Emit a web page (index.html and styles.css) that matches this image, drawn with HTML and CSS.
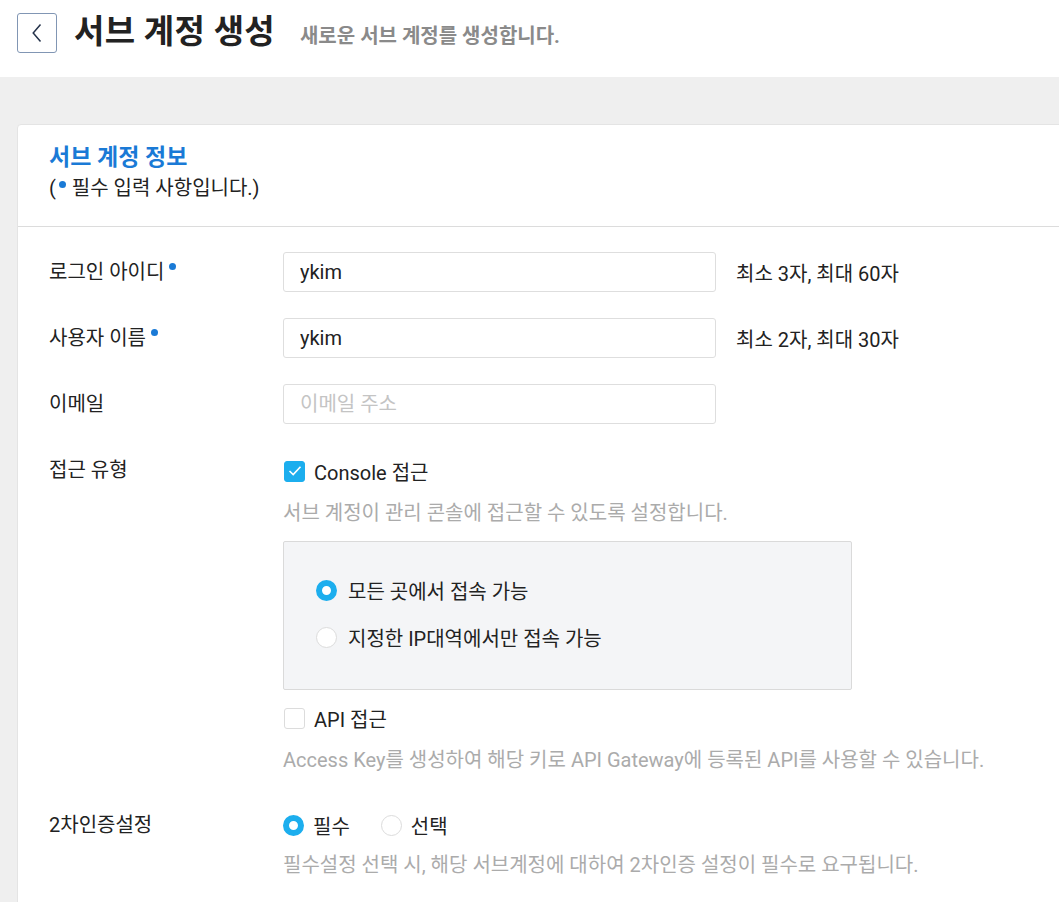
FILE: index.html
```html
<!DOCTYPE html>
<html lang="ko">
<head>
<meta charset="utf-8">
<title>서브 계정 생성</title>
<link rel="stylesheet" href="styles.css">
</head>
<body>
<header class="top">
  <button class="back" type="button" aria-label="뒤로">
    <svg width="14" height="20" viewBox="0 0 14 20"><path d="M10.5 1.5 L3.2 10 L10.5 18.5" fill="none" stroke="#24324a" stroke-width="1.5"/></svg>
  </button>
  <h1 class="title">서브 계정 생성</h1>
  <p class="subtitle">새로운 서브 계정를 생성합니다.</p>
</header>
<main class="main">
  <section class="card">
    <div class="card-head">
      <h2 class="card-title">서브 계정 정보</h2>
      <p class="card-note">(<span class="dot"></span> 필수 입력 사항입니다.)</p>
    </div>
    <div class="form">
      <div class="row">
        <div class="label">로그인 아이디<span class="dot req"></span></div>
        <div class="field">
          <div class="input-line">
            <input class="input" type="text" value="ykim">
            <span class="hint">최소 3자, 최대 60자</span>
          </div>
        </div>
      </div>
      <div class="row">
        <div class="label">사용자 이름<span class="dot req"></span></div>
        <div class="field">
          <div class="input-line">
            <input class="input" type="text" value="ykim">
            <span class="hint">최소 2자, 최대 30자</span>
          </div>
        </div>
      </div>
      <div class="row">
        <div class="label">이메일</div>
        <div class="field">
          <div class="input-line">
            <input class="input" type="text" placeholder="이메일 주소">
          </div>
        </div>
      </div>
      <div class="row access">
        <div class="label">접근 유형</div>
        <div class="field">
          <div class="opt-line">
            <span class="checkbox checked"><svg width="14" height="12" viewBox="0 0 14 12"><path d="M1.5 6 L5.2 9.6 L12.5 1.8" fill="none" stroke="#fff" stroke-width="1.6"/></svg></span>
            <span class="opt-text">Console 접근</span>
          </div>
          <p class="desc">서브 계정이 관리 콘솔에 접근할 수 있도록 설정합니다.</p>
          <div class="subbox">
            <div class="radio-line"><span class="radio on"></span><span class="opt-text">모든 곳에서 접속 가능</span></div>
            <div class="radio-line"><span class="radio"></span><span class="opt-text">지정한 IP대역에서만 접속 가능</span></div>
          </div>
          <div class="opt-line api">
            <span class="checkbox"></span>
            <span class="opt-text">API 접근</span>
          </div>
          <p class="desc">Access Key를 생성하여 해당 키로 API Gateway에 등록된 API를 사용할 수 있습니다.</p>
        </div>
      </div>
      <div class="row mfa">
        <div class="label">2차인증설정</div>
        <div class="field">
          <div class="opt-line inline">
            <span class="radio on"></span><span class="opt-text">필수</span>
            <span class="radio second"></span><span class="opt-text">선택</span>
          </div>
          <p class="desc">필수설정 선택 시, 해당 서브계정에 대하여 2차인증 설정이 필수로 요구됩니다.</p>
        </div>
      </div>
    </div>
  </section>
</main>
</body>
</html>
```

FILE: styles.css
```css
* { box-sizing: border-box; }
html, body {
  margin: 0;
  padding: 0;
  height: 100%;
  overflow: hidden;
}
body {
  background: #efefef;
  font-family: Roboto, "Noto Sans CJK KR", sans-serif;
  color: #222;
  font-size: 20px;
}
.top {
  height: 77px;
  background: #fff;
  display: flex;
  align-items: center;
  padding: 0 17px 11px;
}
.back {
  width: 40px;
  height: 40px;
  border: 1px solid #8196b4;
  border-radius: 3px;
  background: #fff;
  padding: 0;
  display: flex;
  align-items: center;
  justify-content: center;
  flex: none;
}
.title {
  margin: 0 0 3px 17px;
  font-size: 33px;
  line-height: 40px;
  font-weight: 700;
  color: #222;
  letter-spacing: 0.3px;
}
.subtitle {
  margin: 2px 0 0 25px;
  font-size: 20px;
  font-weight: 700;
  color: #8a8a8a;
}
.main {
  padding: 47px 0 0 17px;
}
.card {
  width: 1100px;
  background: #fff;
  border: 1px solid #e4e4e4;
  border-radius: 4px;
  min-height: 900px;
}
.card-head {
  padding: 18px 31px 24px;
  border-bottom: 1px solid #dcdcdc;
}
.card-title {
  margin: 0;
  font-size: 23px;
  font-weight: 700;
  line-height: 30px;
  color: #1a7ad6;
}
.card-note {
  margin: 1px 0 0;
  line-height: 28px;
  font-size: 20px;
  color: #222;
}
.dot {
  display: inline-block;
  width: 7px;
  height: 7px;
  border-radius: 50%;
  background: #1a7ad6;
  vertical-align: 7px;
  margin: 0 1px 0 3px;
}
.dot.req {
  margin-left: 5px;
  vertical-align: 9px;
}
.form {
  padding: 25px 31px 0;
}
.row {
  display: grid;
  grid-template-columns: 234px 1fr;
  margin-bottom: 26px;
}
.label {
  line-height: 40px;
  color: #222;
}
.input-line {
  display: flex;
  align-items: center;
  gap: 20px;
}
.input {
  width: 433px;
  height: 40px;
  border: 1px solid #dedede;
  border-radius: 3px;
  padding: 0 16px;
  font-family: Roboto, "Noto Sans CJK KR", sans-serif;
  font-size: 20px;
  color: #222;
  outline: none;
}
.input::placeholder { color: #c4c4c4; }
.hint {
  color: #222;
}
.row.access .label { line-height: 40px; }
.opt-line {
  height: 42px;
  display: flex;
  align-items: center;
}
.checkbox {
  width: 21px;
  height: 21px;
  border-radius: 3px;
  border: 1px solid #dcdcdc;
  background: #fff;
  display: inline-flex;
  align-items: center;
  justify-content: center;
  flex: none;
  margin-left: 1px;
}
.checkbox.checked {
  background: #1caeee;
  border-color: #1caeee;
}
.opt-text {
  margin-left: 9px;
  color: #222;
}
.desc {
  margin: 7px 0 0;
  line-height: 28px;
  color: #ababab;
}
.subbox {
  width: 569px;
  height: 149px;
  margin-top: 14px;
  background: #f4f5f7;
  border: 1px solid #dadada;
  border-radius: 2px;
  padding: 25px 32px 0;
}
.radio-line {
  height: 47px;
  display: flex;
  align-items: center;
}
.radio {
  width: 21px;
  height: 21px;
  border-radius: 50%;
  border: 1px solid #dcdcdc;
  background: #fff;
  flex: none;
}
.radio.on {
  border: 6px solid #1caeee;
}
.radio-line .opt-text { margin-left: 11px; }
.opt-line.api { margin-top: 7px; }
.opt-line.api + .desc { margin-top: 7px; }
.row.mfa { margin-top: 31px; }
.row.access { margin-bottom: 0; }
.opt-line.inline { height: 40px; }
.opt-line.inline + .desc { margin-top: 6px; }
.radio.second { margin-left: 31px; }
```
